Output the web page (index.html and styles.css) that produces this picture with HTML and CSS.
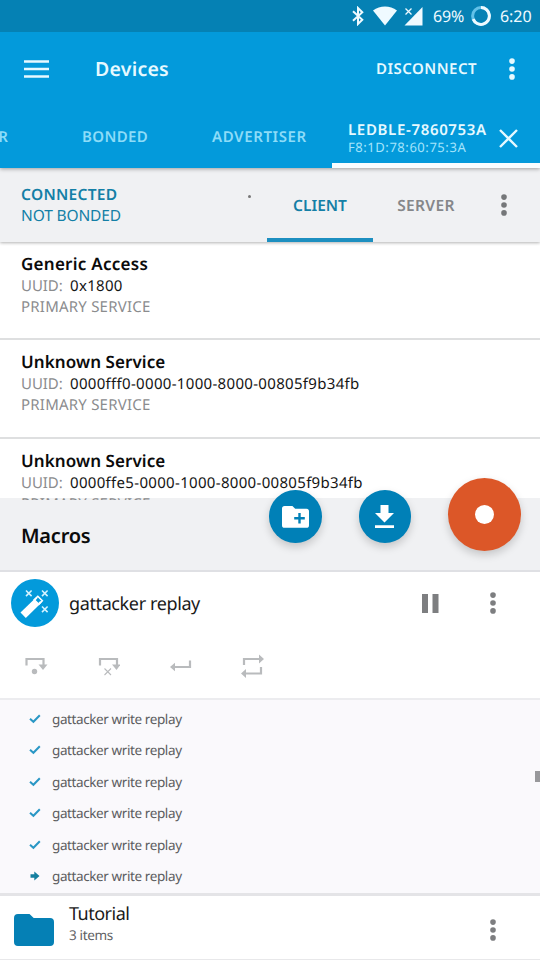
FILE: index.html
```
<!DOCTYPE html>
<html lang="en">
<head>
<meta charset="utf-8">
<title>Devices</title>
<link rel="stylesheet" href="styles.css">
</head>
<body>
<svg width="0" height="0" class="defs" aria-hidden="true">
  <symbol id="dots" viewBox="0 0 8 24"><circle cx="4" cy="4.1" r="2.8"/><circle cx="4" cy="12" r="2.8"/><circle cx="4" cy="19.9" r="2.8"/></symbol>
  <symbol id="check" viewBox="0 0 12 10"><path d="M1 4.8 4.4 7.800 10.8 1.200" fill="none" stroke="currentColor" stroke-width="2"/></symbol>
</svg>
<div class="screen">
  <header class="status">
    <svg class="bt" width="12" height="20" viewBox="0 0 12 20"><path d="M1 5.2 10.3 13.8 6 18V2l4.3 4.2L1 14.8" fill="none" stroke="currentColor" stroke-width="2"/></svg>
    <svg class="wifi" width="24" height="20" viewBox="0 0 24 20"><path d="M0 4.5C7-.8 17-.8 24 4.5L12 19.5z" fill="currentColor"/></svg>
    <svg class="cell" width="19" height="19" viewBox="0 0 19 19"><path d="M18.5 0v18.5H.5z" fill="currentColor"/><path d="M1.5 1.5l6 6M7.5 1.5l-6 6" stroke="currentColor" stroke-width="1.3"/></svg>
    <span class="pct">69%</span>
    <svg class="battery" width="20" height="20" viewBox="0 0 20 20"><circle cx="10" cy="10" r="8.4" fill="none" stroke="#62c1e8" stroke-width="3"/><path d="M10 1.6A8.4 8.4 0 1 1 2.2 13.1" fill="none" stroke="currentColor" stroke-width="3"/></svg>
    <span class="clock">6:20</span>
  </header>
  <div class="appbar">
    <svg class="menu" width="25" height="18" viewBox="0 0 25 18"><path d="M0 1.5h25M0 9h25M0 16.5h25" stroke="currentColor" stroke-width="2.7"/></svg>
    <h1>Devices</h1>
    <span class="disconnect">DISCONNECT</span>
    <svg class="dots" width="8" height="24"><use href="#dots"/></svg>
  </div>
  <nav class="tabs">
    <span class="tab scanner">SCANNER</span>
    <span class="tab bonded">BONDED</span>
    <span class="tab advertiser">ADVERTISER</span>
    <div class="tab device">
      <div><div class="name">LEDBLE-7860753A</div><div class="mac">F8:1D:78:60:75:3A</div></div>
      <svg width="19" height="19" viewBox="0 0 19 19"><path d="M1 1l17 17M18 1L1 18" stroke="currentColor" stroke-width="2.4"/></svg>
    </div>
  </nav>
  <div class="connection">
    <div class="state"><div class="connected">CONNECTED</div><div class="bond">NOT BONDED</div></div>
    <i class="speck"></i>
    <span class="side client">CLIENT</span>
    <span class="side server">SERVER</span>
    <svg class="dots" width="8" height="24"><use href="#dots"/></svg>
  </div>
  <main class="services">
    <section class="service"><h2 class="ga">Generic Access</h2><p class="uuid"><span>UUID:</span><b>0x1800</b></p><p class="kind">PRIMARY SERVICE</p></section>
    <section class="service"><h2>Unknown Service</h2><p class="uuid"><span>UUID:</span><b>0000fff0-0000-1000-8000-00805f9b34fb</b></p><p class="kind">PRIMARY SERVICE</p></section>
    <section class="service"><h2>Unknown Service</h2><p class="uuid"><span>UUID:</span><b>0000ffe5-0000-1000-8000-00805f9b34fb</b></p><p class="kind">PRIMARY SERVICE</p></section>
  </main>
  <div class="macros">
    <h2>Macros</h2>
    <div class="fabs">
      <div class="fab"><svg width="27" height="22" viewBox="0 0 27 22"><path d="M2.6 0h7.8l2.8 2.8h11.2a2.6 2.6 0 0 1 2.6 2.6v13.8a2.6 2.6 0 0 1-2.600 2.600H2.600A2.600 2.600 0 0 1 0 19.200V2.600A2.600 2.600 0 0 1 2.600 0z" fill="#fff"/><path d="M17.500 7v10.600M12.200 12.300h10.600" stroke="#0080b7" stroke-width="2.400"/></svg></div>
      <div class="fab"><svg width="19" height="23" viewBox="0 0 19 23"><path d="M5.500 0h8v8H19l-9.500 9.500L0 8h5.500zM0 20.200h19V23H0z" fill="#fff"/></svg></div>
      <div class="fab record"><i></i></div>
    </div>
  </div>
  <div class="macro">
    <div class="macro-head">
      <div class="wand"><svg width="48" height="48" viewBox="0 0 48 48"><path d="M9.500 33.500 25.300 18.200l5.300 5.400L14.800 39z" fill="#fff"/><path d="M27 18.800l2.700 2.800-2.600 2.600-2.800-2.800z" fill="#039adb"/><path d="M26.800 17.300l4.500 4.500-3.500 3.500-4.600-4.600z" fill="none" stroke="#fff" stroke-width="1.600"/><g stroke="#d5f3ff" stroke-width="1.600"><path d="M15 11.500l5.600 5.600M20.600 11.500L15 17.100M31 11.500l5.600 5.600M36.600 11.500L31 17.100M31 27.500l5.600 5.600M36.600 27.500L31 33.100"/></g></svg></div>
      <span class="macro-name">gattacker replay</span>
      <svg class="pause" width="17" height="19" viewBox="0 0 17 19"><path d="M0 0h6v19H0zM10.500 0h6v19h-6z" fill="currentColor"/></svg>
      <svg class="dots" width="8" height="24"><use href="#dots"/></svg>
    </div>
    <div class="tools">
      <svg width="24" height="20" viewBox="0 0 24 20"><path d="M2.500 9.500V3h17v6" fill="none" stroke="currentColor" stroke-width="2.200"/><path d="M14.500 8.500h9L19 14z" fill="currentColor"/><circle cx="10.500" cy="15.500" r="2.700" fill="currentColor"/></svg>
      <svg width="24" height="20" viewBox="0 0 24 20"><path d="M4 9.500V3h17v6" fill="none" stroke="currentColor" stroke-width="2.200"/><path d="M16 8.500h8.500L20.500 14z" fill="currentColor"/><path d="M8.500 12.500l6.500 6.500M15 12.500l-6.500 6.500" stroke="currentColor" stroke-width="1.100"/></svg>
      <svg width="24" height="20" viewBox="0 0 24 20"><path d="M22 4.500V11H5" fill="none" stroke="currentColor" stroke-width="2.200"/><path d="M7 6.800 2 11l5 4.200z" fill="currentColor"/></svg>
      <svg class="repeat" width="24" height="26" viewBox="0 0 24 26"><path d="M4 12V6h16M21 14v6.500H4" fill="none" stroke="currentColor" stroke-width="2.200"/><path d="M19 1.500 24 6l-5 4.500zM6 16 1 20.500 6 25z" fill="currentColor"/></svg>
    </div>
  </div>
  <div class="log">
    <div class="step"><svg width="12" height="10"><use href="#check"/></svg>gattacker write replay</div>
    <div class="step"><svg width="12" height="10"><use href="#check"/></svg>gattacker write replay</div>
    <div class="step"><svg width="12" height="10"><use href="#check"/></svg>gattacker write replay</div>
    <div class="step"><svg width="12" height="10"><use href="#check"/></svg>gattacker write replay</div>
    <div class="step"><svg width="12" height="10"><use href="#check"/></svg>gattacker write replay</div>
    <div class="step current"><svg width="12" height="10" viewBox="0 0 12 10"><path d="M1.500 3.200H5.300V.5L10.500 5l-5.200 4.500V6.800H1.500z" fill="currentColor"/></svg>gattacker write replay</div>
    <i class="thumb"></i>
  </div>
  <div class="folder">
    <svg class="folder-icon" width="40" height="32" viewBox="0 0 40 32"><path d="M4 0h11.500l4.200 4H36a4 4 0 0 1 4 4v20a4 4 0 0 1-4 4H4a4 4 0 0 1-4-4V4a4 4 0 0 1 4-4z" fill="#0580b5"/></svg>
    <div class="folder-text"><div class="folder-name">Tutorial</div><div class="count">3 items</div></div>
    <svg class="dots" width="8" height="24"><use href="#dots"/></svg>
  </div>
</div>
</body>
</html>
```
FILE: styles.css
```
* { box-sizing: border-box; }
body, h1, h2, p { margin: 0; }
body { background: #fff; color: #0b0b0b; font-family: "Noto Sans", sans-serif; font-size: 15px; text-rendering: geometricPrecision; }
svg { display: block; flex: none; }
.defs { position: absolute; }
.screen { width: 540px; height: 960px; overflow: hidden; display: flex; flex-direction: column; white-space: nowrap; }
.screen > * { flex: none; }
.dots { fill: currentColor; }

.status { height: 32px; background: #0581b4; color: #effaff; display: flex; align-items: center; padding-left: 352px; font-size: 16px; }
.wifi { margin-left: 9px; }
.cell { margin-left: 7px; }
.pct { width: 32px; margin-left: 10px; letter-spacing: -.2px; }
.battery { margin-left: 6px; }
.clock { margin-left: 9px; letter-spacing: -.06px; }

.appbar { height: 74px; background: #039adb; color: #e6f9ff; display: flex; align-items: center; padding-left: 24px; font-weight: 600; position: relative; z-index: 3; }
.appbar h1 { width: 281px; margin-left: 46px; margin-top: -2px; font-size: 19.5px; font-weight: 600; letter-spacing: .24px; }
.disconnect { width: 101px; letter-spacing: .49px; }
.appbar .dots { margin-left: 30.5px; }

.tabs { height: 62px; background: #039adb; color: #8ddcf8; display: flex; align-items: center; font-weight: 600; position: relative; z-index: 2; box-shadow: 0 1px 4px rgba(0,0,0,.35); }
.scanner { width: 8px; display: flex; justify-content: flex-end; }
.bonded { width: 130px; margin-left: 74px; letter-spacing: .35px; }
.advertiser { width: 120px; letter-spacing: .6px; }
.device { width: 208px; height: 62px; padding: 5px 0 0 16px; border-bottom: 5px solid #f8fdff; display: flex; align-items: center; gap: 13px; color: #e6f9ff; }
.device > div { width: 138px; }
.name { line-height: 17px; letter-spacing: .66px; font-weight: 600; padding-top: 3px; }
.mac { font-size: 13px; line-height: 16px; font-weight: 400; letter-spacing: .55px; color: #a5e4fb; }
.device svg { margin-top: 3px; }

.connection { height: 74px; background: #f0f1f3; display: flex; align-items: center; padding-left: 21px; font-size: 15.5px; font-weight: 600; color: #757779; position: relative; z-index: 1; box-shadow: 0 1px 3px rgba(0,0,0,.3); }
.state { width: 227px; color: #147fa6; line-height: 21px; }
.connected { letter-spacing: .3px; }
.bond { font-weight: 400; letter-spacing: -.13px; }
.speck { width: 3px; height: 3px; border-radius: 50%; background: #777; margin: -17px 16px 0 0; }
.side { height: 74px; width: 106px; display: flex; align-items: center; justify-content: center; border-bottom: 4px solid transparent; padding-top: 4px; }
.client { color: #147fa6; border-color: #1d8fc0; }
.server { letter-spacing: .33px; color: #85878a; }
.connection .dots { margin-left: 20.5px; }

.services { height: 256px; clip-path: inset(0 0 -2px 0); position: relative; }
.service { height: 98.3px; padding: 10px 21px 0; border-bottom: 2px solid #dedfe0; }
.service:last-child { border-color: transparent; }
.service h2 { font-size: 17px; line-height: 24px; font-weight: 600; letter-spacing: .08px; }
.service .ga { letter-spacing: .26px; }
.uuid, .kind { line-height: 21px; color: #8b8c8e; letter-spacing: .22px; }
.uuid { display: flex; letter-spacing: -.05px; }
.uuid span { width: 49px; }
.uuid b { font-weight: 400; color: #151515; letter-spacing: .32px; }

.macros { height: 74px; background: #f0f1f3; border-bottom: 2px solid #dfe0e4; display: flex; align-items: center; padding-left: 21px; position: relative; z-index: -1; }
.macros h2 { width: 248px; font-size: 20px; font-weight: 600; letter-spacing: -.22px; padding-top: 3px; }
.fabs { display: flex; align-items: center; gap: 37px; margin-top: -37px; }
.fab { width: 52.5px; height: 52.5px; border-radius: 50%; background: #0080b7; display: flex; align-items: center; justify-content: center; box-shadow: 0 4px 8px rgba(0,0,0,.18); margin-top: 2px; }
.record { width: 73px; height: 73px; background: #dc5728; margin-top: -2px; }
.record i { width: 19px; height: 19px; border-radius: 50%; background: #fff; }

.macro { height: 126px; }
.macro-head { height: 62px; display: flex; align-items: center; padding-left: 11px; color: #7d7e80; }
.wand { width: 48px; height: 48px; border-radius: 50%; background: #039adb; }
.macro-name { width: 353px; margin: 2px 0 0 10px; font-size: 18px; letter-spacing: -.38px; color: #1a1a1a; }
.macro-head .dots { margin-left: 50px; }
.tools { display: flex; align-items: center; gap: 48px; padding-left: 24px; height: 64px; color: #b9bbbd; }

.log { height: 198px; background: #faf9fc; border-top: 2px solid #ececef; border-bottom: 3px solid #e4e4e7; padding-top: 3px; position: relative; }
.step { height: 31.5px; display: flex; align-items: center; gap: 11px; padding-left: 29px; font-size: 13.5px; letter-spacing: -.4px; color: #5c5d60; }
.step svg { color: #2a97c5; }
.current svg { color: #147f9f; }
.thumb { position: absolute; right: 0; top: 71px; width: 5px; height: 11px; background: #98989b; }

.folder { height: 64px; display: flex; align-items: center; padding-left: 14px; border-bottom: 1px solid #e8e8ea; color: #7d7e80; }
.folder-icon { margin-top: 4px; }
.folder-text { width: 420px; margin: -7px 0 0 15px; }
.folder-name { font-size: 18px; line-height: 22px; letter-spacing: -.5px; color: #1a1a1a; }
.count { font-size: 13.5px; line-height: 20px; letter-spacing: -.35px; color: #606164; }
.folder .dots { margin-top: 4px; }
```
